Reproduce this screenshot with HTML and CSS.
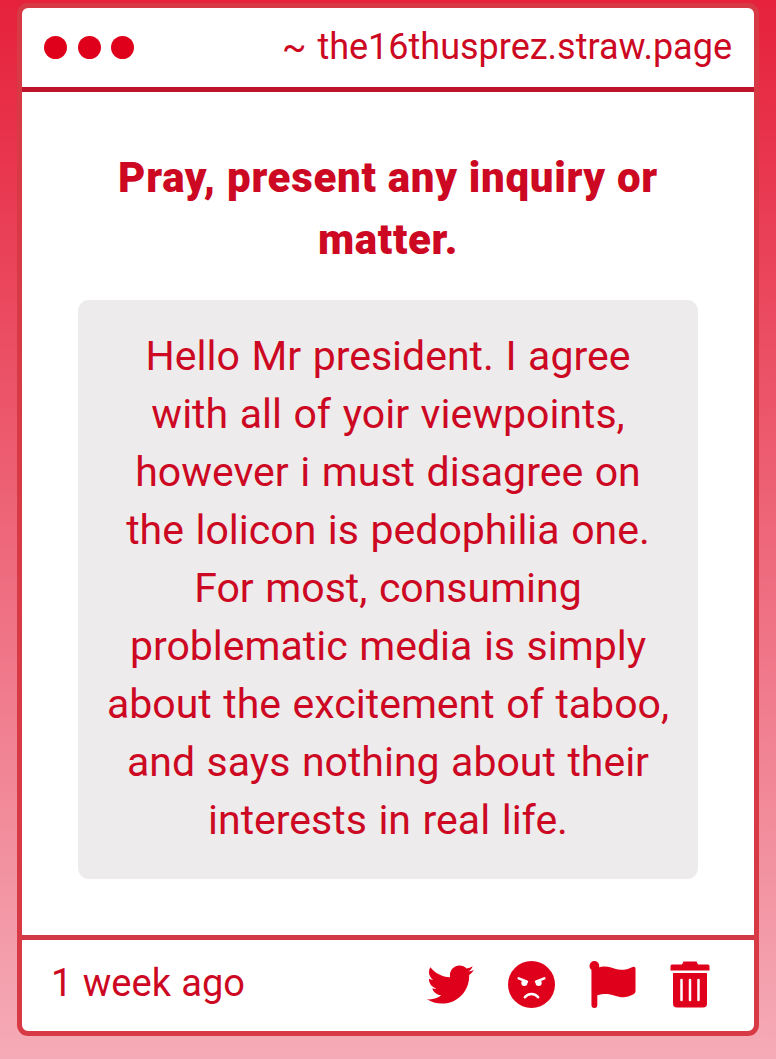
FILE: index.html
```html
<!DOCTYPE html>
<html lang="en">
<head>
    <meta charset="UTF-8">
    <meta name="viewport" content="width=device-width, initial-scale=1.0">
    <title>the16thusprez.straw.page</title>
    <link rel="stylesheet" href="styles.css">
</head>
<body>

    <div class="card">
        <!-- Window bar -->
        <header class="card-header">
            <div class="dots">
                <span class="dot"></span>
                <span class="dot"></span>
                <span class="dot"></span>
            </div>
            <div class="site">~ the16thusprez.straw.page</div>
        </header>

        <!-- Question -->
        <main class="card-body">
            <h1>Pray, present any inquiry or matter.</h1>
            <p class="message">Hello Mr president. I agree with all of yoir viewpoints, however i must disagree on the lolicon is pedophilia one. For most, consuming problematic media is simply about the excitement of taboo, and says nothing about their interests in real life.</p>
        </main>

        <!-- Date and actions -->
        <footer class="card-footer">
            <div class="date">1 week ago</div>
            <div class="actions">
                <svg class="icon" viewBox="0 0 512 512"><path d="M459.37 151.716c.325 4.548.325 9.097.325 13.645 0 138.72-105.583 298.558-298.558 298.558-59.452 0-114.68-17.219-161.137-47.106 8.447.974 16.568 1.299 25.34 1.299 49.055 0 94.213-16.568 130.274-44.832-46.132-.975-84.792-31.188-98.112-72.772 6.498.974 12.995 1.624 19.818 1.624 9.421 0 18.843-1.3 27.614-3.573-48.081-9.747-84.143-51.98-84.143-102.985v-1.299c13.969 7.797 30.214 12.67 47.431 13.319-28.264-18.843-46.781-51.005-46.781-87.391 0-19.492 5.197-37.36 14.294-52.954 51.655 63.675 129.3 105.258 216.365 109.807-1.624-7.797-2.599-15.918-2.599-24.04 0-57.828 46.782-104.934 104.934-104.934 30.213 0 57.502 12.67 76.67 33.137 23.715-4.548 46.456-13.32 66.599-25.34-7.798 24.366-24.366 44.833-46.132 57.827 21.117-2.273 41.584-8.122 60.426-16.243-14.292 20.791-32.161 39.308-52.628 54.253z"/></svg>
                <svg class="icon" viewBox="0 0 46 46">
                    <circle cx="23" cy="23" r="23"/>
                    <path class="cut" d="M10.500 17l8 3.200M35.500 17l-8 3.200M16.500 35.500c3-4.300 10-4.300 13 0"/>
                    <circle class="hole" cx="16" cy="21.500" r="3"/>
                    <circle class="hole" cx="30" cy="21.500" r="3"/>
                </svg>
                <svg class="icon flag" viewBox="0 0 47 48"><circle cx="5" cy="5" r="5"/><path d="M2 7h6c8-2.500 13-1 18 1 6 2 12 1 18-2q3-1 3 2v23q0 2-2 3c-7 4-13 3.500-19 1.500-6-2-11-2.500-18-.500v10q0 3-3 3t-3-3z"/></svg>
                <svg class="icon trash" viewBox="0 0 40 46"><path d="M2 3h10l1.500-3h13L28 3h10q1.500 0 1.500 1.500V9h-39V4.500Q.500 3 2 3z"/><path d="M3 11.500h34V42q0 4-4 4H7q-4 0-4-4z"/><path class="cut" d="M11.500 18.500v20M20 18.500v20M28.500 18.500v20"/></svg>
            </div>
        </footer>
    </div>

</body>
</html>
```
FILE: styles.css
```css
* {
    box-sizing: border-box;
}
body {
    margin: 0;
    padding: 3px 17px 23px;
    height: 1059px;
    font-family: Roboto, "Liberation Sans", sans-serif;
    color: #cc0822;
    background: linear-gradient(#e6213b, #f5abb7);
}
.card {
    display: flex;
    flex-direction: column;
    height: 1033px;
    border: 5px solid #d83a45;
    border-radius: 11px;
    background: #fff;
}
.card-header {
    display: flex;
    justify-content: space-between;
    align-items: center;
    height: 84px;
    padding: 0 22px;
    border-bottom: 5px solid #bd142b;
}
.dots {
    display: flex;
    gap: 10.7px;
}
.dot {
    width: 23px;
    height: 23px;
    border-radius: 50%;
    background: #df001b;
}
.site {
    padding-bottom: 1px;
    font-size: 36px;
    word-spacing: 2px;
}
.card-body {
    flex: 1;
    padding: 55px 56px 0;
    text-align: center;
}
h1 {
    margin: 0 0 29px;
    font-size: 42px;
    font-weight: 900;
    line-height: 62px;
    letter-spacing: 0.7px;
}
.message {
    height: 579px;
    margin: 0;
    padding: 27px 28px;
    border-radius: 11px;
    background: #edebec;
    font-size: 41px;
    line-height: 58px;
    word-spacing: 1.4px;
}
.card-footer {
    display: flex;
    justify-content: space-between;
    align-items: center;
    height: 96px;
    padding: 0 44px 3px 29px;
    border-top: 5px solid #d13a45;
}
.date {
    padding-bottom: 3px;
    font-size: 38px;
    word-spacing: 1px;
}
.actions {
    display: flex;
    align-items: center;
    gap: 34px;
}
.icon {
    width: 47px;
    height: 47px;
    fill: #df001b;
}
.trash {
    width: 40px;
}
.cut {
    fill: none;
    stroke: #fff;
    stroke-width: 2.5;
    stroke-linecap: round;
}
.hole {
    fill: #fff;
}
```
